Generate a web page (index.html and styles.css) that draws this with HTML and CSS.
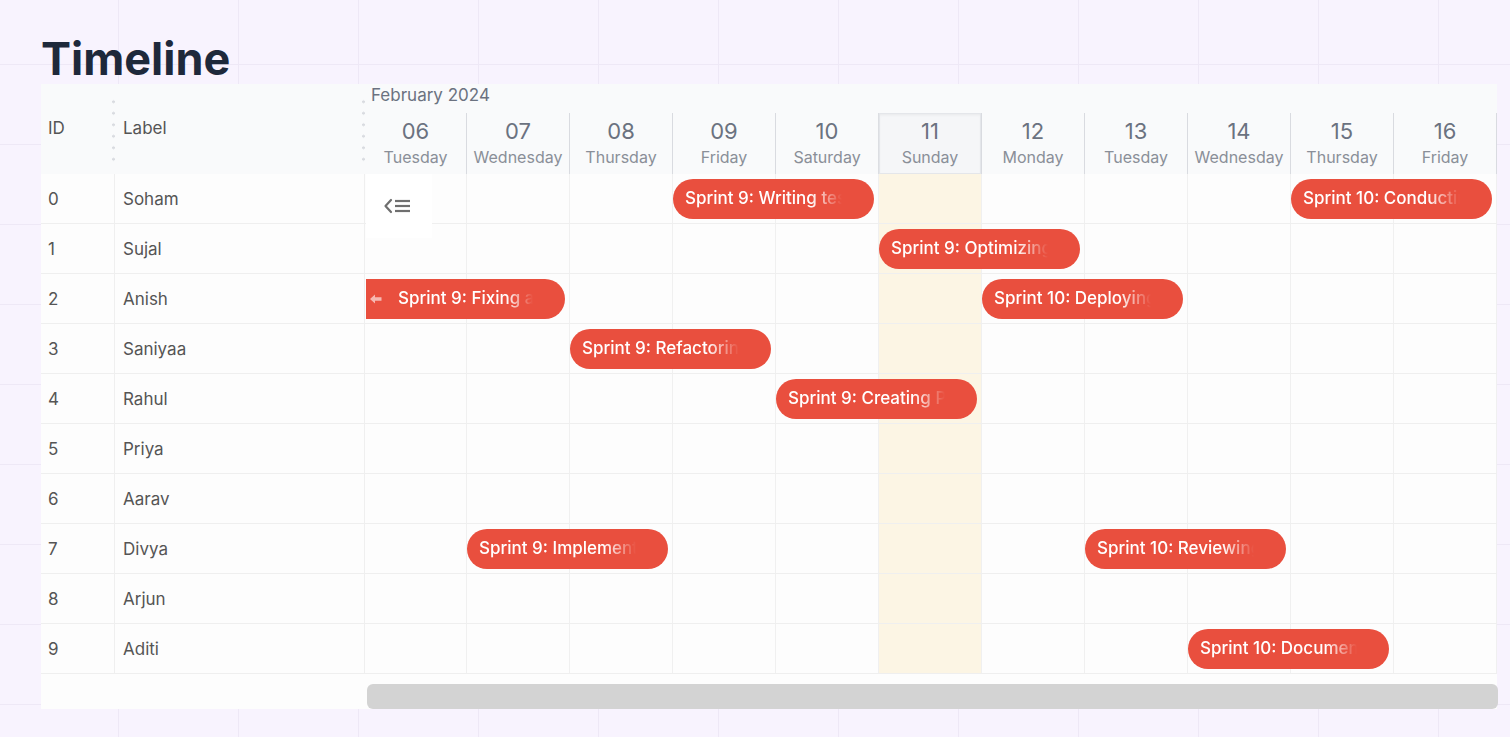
FILE: index.html
```html
<!DOCTYPE html>
<html lang="en">
<head>
<meta charset="utf-8">
<title>Timeline</title>
<link rel="stylesheet" href="styles.css">
</head>
<body>
<h1 class="title">Timeline</h1>
<div class="gantt">
  <div class="side">
    <div class="side-head">
      <div class="col-id">ID</div>
      <div class="col-label">Label</div>
      <span class="handle handle-a"></span>
      <span class="handle handle-b"></span>
    </div>
    <div class="side-row"><div class="col-id">0</div><div class="col-label">Soham</div></div>
    <div class="side-row"><div class="col-id">1</div><div class="col-label">Sujal</div></div>
    <div class="side-row"><div class="col-id">2</div><div class="col-label">Anish</div></div>
    <div class="side-row"><div class="col-id">3</div><div class="col-label">Saniyaa</div></div>
    <div class="side-row"><div class="col-id">4</div><div class="col-label">Rahul</div></div>
    <div class="side-row"><div class="col-id">5</div><div class="col-label">Priya</div></div>
    <div class="side-row"><div class="col-id">6</div><div class="col-label">Aarav</div></div>
    <div class="side-row"><div class="col-id">7</div><div class="col-label">Divya</div></div>
    <div class="side-row"><div class="col-id">8</div><div class="col-label">Arjun</div></div>
    <div class="side-row"><div class="col-id">9</div><div class="col-label">Aditi</div></div>
    <div class="side-foot"></div>
  </div>

  <div class="chart">
    <div class="chart-head">
      <div class="month">February 2024</div>
      <div class="days">
        <div class="day"><span class="num">06</span><span class="name">Tuesday</span></div>
        <div class="day"><span class="num">07</span><span class="name">Wednesday</span></div>
        <div class="day"><span class="num">08</span><span class="name">Thursday</span></div>
        <div class="day"><span class="num">09</span><span class="name">Friday</span></div>
        <div class="day"><span class="num">10</span><span class="name">Saturday</span></div>
        <div class="day sun"><span class="num">11</span><span class="name">Sunday</span></div>
        <div class="day"><span class="num">12</span><span class="name">Monday</span></div>
        <div class="day"><span class="num">13</span><span class="name">Tuesday</span></div>
        <div class="day"><span class="num">14</span><span class="name">Wednesday</span></div>
        <div class="day"><span class="num">15</span><span class="name">Thursday</span></div>
        <div class="day"><span class="num">16</span><span class="name">Friday</span></div>
      </div>
    </div>

    <div class="chart-body">
      <div class="row">
        <div class="c"></div><div class="c"></div><div class="c"></div><div class="c"></div><div class="c"></div><div class="c sun"></div><div class="c"></div><div class="c"></div><div class="c"></div><div class="c"></div><div class="c"></div>
        <div class="bar" style="left:308px;width:201px"><span class="bar-text">Sprint 9: Writing tests</span></div>
        <div class="bar" style="left:926px;width:201px"><span class="bar-text">Sprint 10: Conducting review</span></div>
      </div>
      <div class="row">
        <div class="c"></div><div class="c"></div><div class="c"></div><div class="c"></div><div class="c"></div><div class="c sun"></div><div class="c"></div><div class="c"></div><div class="c"></div><div class="c"></div><div class="c"></div>
        <div class="bar" style="left:514px;width:201px"><span class="bar-text">Sprint 9: Optimizing queries</span></div>
      </div>
      <div class="row">
        <div class="c"></div><div class="c"></div><div class="c"></div><div class="c"></div><div class="c"></div><div class="c sun"></div><div class="c"></div><div class="c"></div><div class="c"></div><div class="c"></div><div class="c"></div>
        <div class="bar bar-cut" style="left:1px;width:199px">
          <svg class="bar-arrow" width="12" height="10" viewBox="0 0 12 10"><path d="M0 5 L5 0.5 L5 3.3 L11.5 3.3 L11.5 6.7 L5 6.7 L5 9.5 Z" fill="currentColor"/></svg>
          <span class="bar-text">Sprint 9: Fixing alerts</span>
        </div>
        <div class="bar" style="left:617px;width:201px"><span class="bar-text">Sprint 10: Deploying build</span></div>
      </div>
      <div class="row">
        <div class="c"></div><div class="c"></div><div class="c"></div><div class="c"></div><div class="c"></div><div class="c sun"></div><div class="c"></div><div class="c"></div><div class="c"></div><div class="c"></div><div class="c"></div>
        <div class="bar" style="left:205px;width:201px"><span class="bar-text">Sprint 9: Refactoring code</span></div>
      </div>
      <div class="row">
        <div class="c"></div><div class="c"></div><div class="c"></div><div class="c"></div><div class="c"></div><div class="c sun"></div><div class="c"></div><div class="c"></div><div class="c"></div><div class="c"></div><div class="c"></div>
        <div class="bar" style="left:411px;width:201px"><span class="bar-text">Sprint 9: Creating Prototype</span></div>
      </div>
      <div class="row">
        <div class="c"></div><div class="c"></div><div class="c"></div><div class="c"></div><div class="c"></div><div class="c sun"></div><div class="c"></div><div class="c"></div><div class="c"></div><div class="c"></div><div class="c"></div>
      </div>
      <div class="row">
        <div class="c"></div><div class="c"></div><div class="c"></div><div class="c"></div><div class="c"></div><div class="c sun"></div><div class="c"></div><div class="c"></div><div class="c"></div><div class="c"></div><div class="c"></div>
      </div>
      <div class="row">
        <div class="c"></div><div class="c"></div><div class="c"></div><div class="c"></div><div class="c"></div><div class="c sun"></div><div class="c"></div><div class="c"></div><div class="c"></div><div class="c"></div><div class="c"></div>
        <div class="bar" style="left:102px;width:201px"><span class="bar-text">Sprint 9: Implementing API</span></div>
        <div class="bar" style="left:720px;width:201px"><span class="bar-text">Sprint 10: Reviewing PRs</span></div>
      </div>
      <div class="row">
        <div class="c"></div><div class="c"></div><div class="c"></div><div class="c"></div><div class="c"></div><div class="c sun"></div><div class="c"></div><div class="c"></div><div class="c"></div><div class="c"></div><div class="c"></div>
      </div>
      <div class="row">
        <div class="c"></div><div class="c"></div><div class="c"></div><div class="c"></div><div class="c"></div><div class="c sun"></div><div class="c"></div><div class="c"></div><div class="c"></div><div class="c"></div><div class="c"></div>
        <div class="bar" style="left:823px;width:201px"><span class="bar-text">Sprint 10: Documenting</span></div>
      </div>

      <button class="toggle" type="button" aria-label="Collapse grid">
        <svg width="30" height="16" viewBox="0 0 30 16">
          <polyline points="8,2 2.5,8 8,14" fill="none" stroke="currentColor" stroke-width="2.2" stroke-linecap="round" stroke-linejoin="round"/>
          <line x1="12" y1="3" x2="27" y2="3" stroke="currentColor" stroke-width="2.2"/>
          <line x1="12" y1="8" x2="27" y2="8" stroke="currentColor" stroke-width="2.2"/>
          <line x1="12" y1="13" x2="27" y2="13" stroke="currentColor" stroke-width="2.2"/>
        </svg>
      </button>
    </div>

    <div class="chart-foot">
      <div class="thumb"></div>
    </div>
  </div>
</div>
</body>
</html>
```
FILE: styles.css
```css
* { box-sizing: border-box; }

html, body { margin: 0; }

body {
  font-family: Inter, "Noto Sans", sans-serif;
  min-height: 737px;
  padding: 35px 0 0 41px;
  background-color: #f8f3fe;
  background-image:
    linear-gradient(to right, #eee8f6 1px, transparent 1px),
    linear-gradient(to bottom, #eee8f6 1px, transparent 1px);
  background-size: 120px 80px;
  background-position: 118px 64px;
}

.title {
  margin: 0 0 1px;
  font-size: 45px;
  line-height: 48px;
  font-weight: 700;
  color: #1e293b;
}

.gantt {
  display: flex;
  width: 1456px;
}

/* ---------- left grid ---------- */
.side {
  width: 324px;
  flex: none;
  color: #555;
  font-size: 17px;
}

.side-head {
  position: relative;
  display: flex;
  align-items: center;
  height: 90px;
  background: #f9fafb;
  padding-bottom: 2px;
}

.col-id {
  width: 74px;
  padding-left: 7px;
}

.col-label {
  flex: 1;
  padding-left: 8px;
}

.handle {
  position: absolute;
  top: 12px;
  width: 3px;
  height: 69px;
  background-image: radial-gradient(circle, #d9dbe0 1.3px, transparent 1.6px);
  background-size: 3px 11.5px;
}
.handle-a { left: 71px; }
.handle-b { left: 321px; }

.side-row {
  display: flex;
  height: 50px;
  background: #fdfdfd;
  border-bottom: 1px solid #efefef;
  border-right: 1px solid #efefef;
}

.side-row .col-id,
.side-row .col-label {
  display: flex;
  align-items: center;
  padding-top: 1px;
}

.side-row .col-id {
  border-right: 1px solid #efefef;
}

.side-foot {
  height: 35px;
  background: #fdfdfd;
}

/* ---------- chart ---------- */
.chart {
  width: 1132px;
  flex: none;
}

.chart-head {
  background: #f9fafb;
}

.month {
  height: 29px;
  line-height: 22px;
  padding-left: 6px;
  font-size: 17px;
  color: #6b7280;
}

.days {
  display: grid;
  grid-template-columns: 102px repeat(10, 103px);
  height: 61px;
}

.day {
  display: flex;
  flex-direction: column;
  align-items: center;
  padding-top: 5px;
  border-right: 1px solid #d9dbe0;
}

.day.sun {
  background: #f5f6f8;
  box-shadow: inset 0 0 0 1px #e4e6ea, inset 0 2px 3px rgba(0, 0, 0, 0.06);
  border-left: 1px solid #dcdee2;
  margin-left: -1px;
}

.num {
  font-size: 22px;
  line-height: 26px;
  color: #6b7280;
}

.name {
  margin-top: 4px;
  font-size: 16px;
  line-height: 19px;
  color: #8a8f98;
}

.chart-body {
  position: relative;
}

.row {
  position: relative;
  display: grid;
  grid-template-columns: 102px repeat(10, 103px);
  height: 50px;
}

.c {
  background: #fdfdfd;
  border-right: 1px solid #f0f0f0;
  border-bottom: 1px solid #efefef;
}

.c.sun {
  background: #fcf5e4;
}

.bar {
  position: absolute;
  top: 5px;
  height: 40px;
  display: flex;
  align-items: center;
  padding: 0 32px 0 12px;
  border-radius: 20px;
  background: #e94f3e;
  color: #fff;
  font-size: 17px;
  font-weight: 500;
}

.bar-cut {
  border-radius: 0 20px 20px 0;
  padding-left: 4px;
}

.bar-arrow {
  flex: none;
  color: rgba(255, 255, 255, 0.6);
  margin-right: 16px;
}

.bar-text {
  flex: 1;
  min-width: 0;
  overflow: hidden;
  white-space: nowrap;
  -webkit-mask-image: linear-gradient(to right, #000 80%, transparent 100%);
  mask-image: linear-gradient(to right, #000 80%, transparent 100%);
  padding-bottom: 2px;
}

.toggle {
  position: absolute;
  top: 0;
  left: 1px;
  width: 66px;
  height: 64px;
  display: flex;
  align-items: center;
  justify-content: center;
  padding: 0 3px 0 0;
  border: 0;
  background: #fff;
  color: #6f6f6f;
}

.chart-foot {
  height: 35px;
  padding: 10px 0 0 2px;
  background: #fdfdfd;
}

.thumb {
  width: 1131px;
  height: 25px;
  border-radius: 6px;
  background: #d3d3d3;
}
```
